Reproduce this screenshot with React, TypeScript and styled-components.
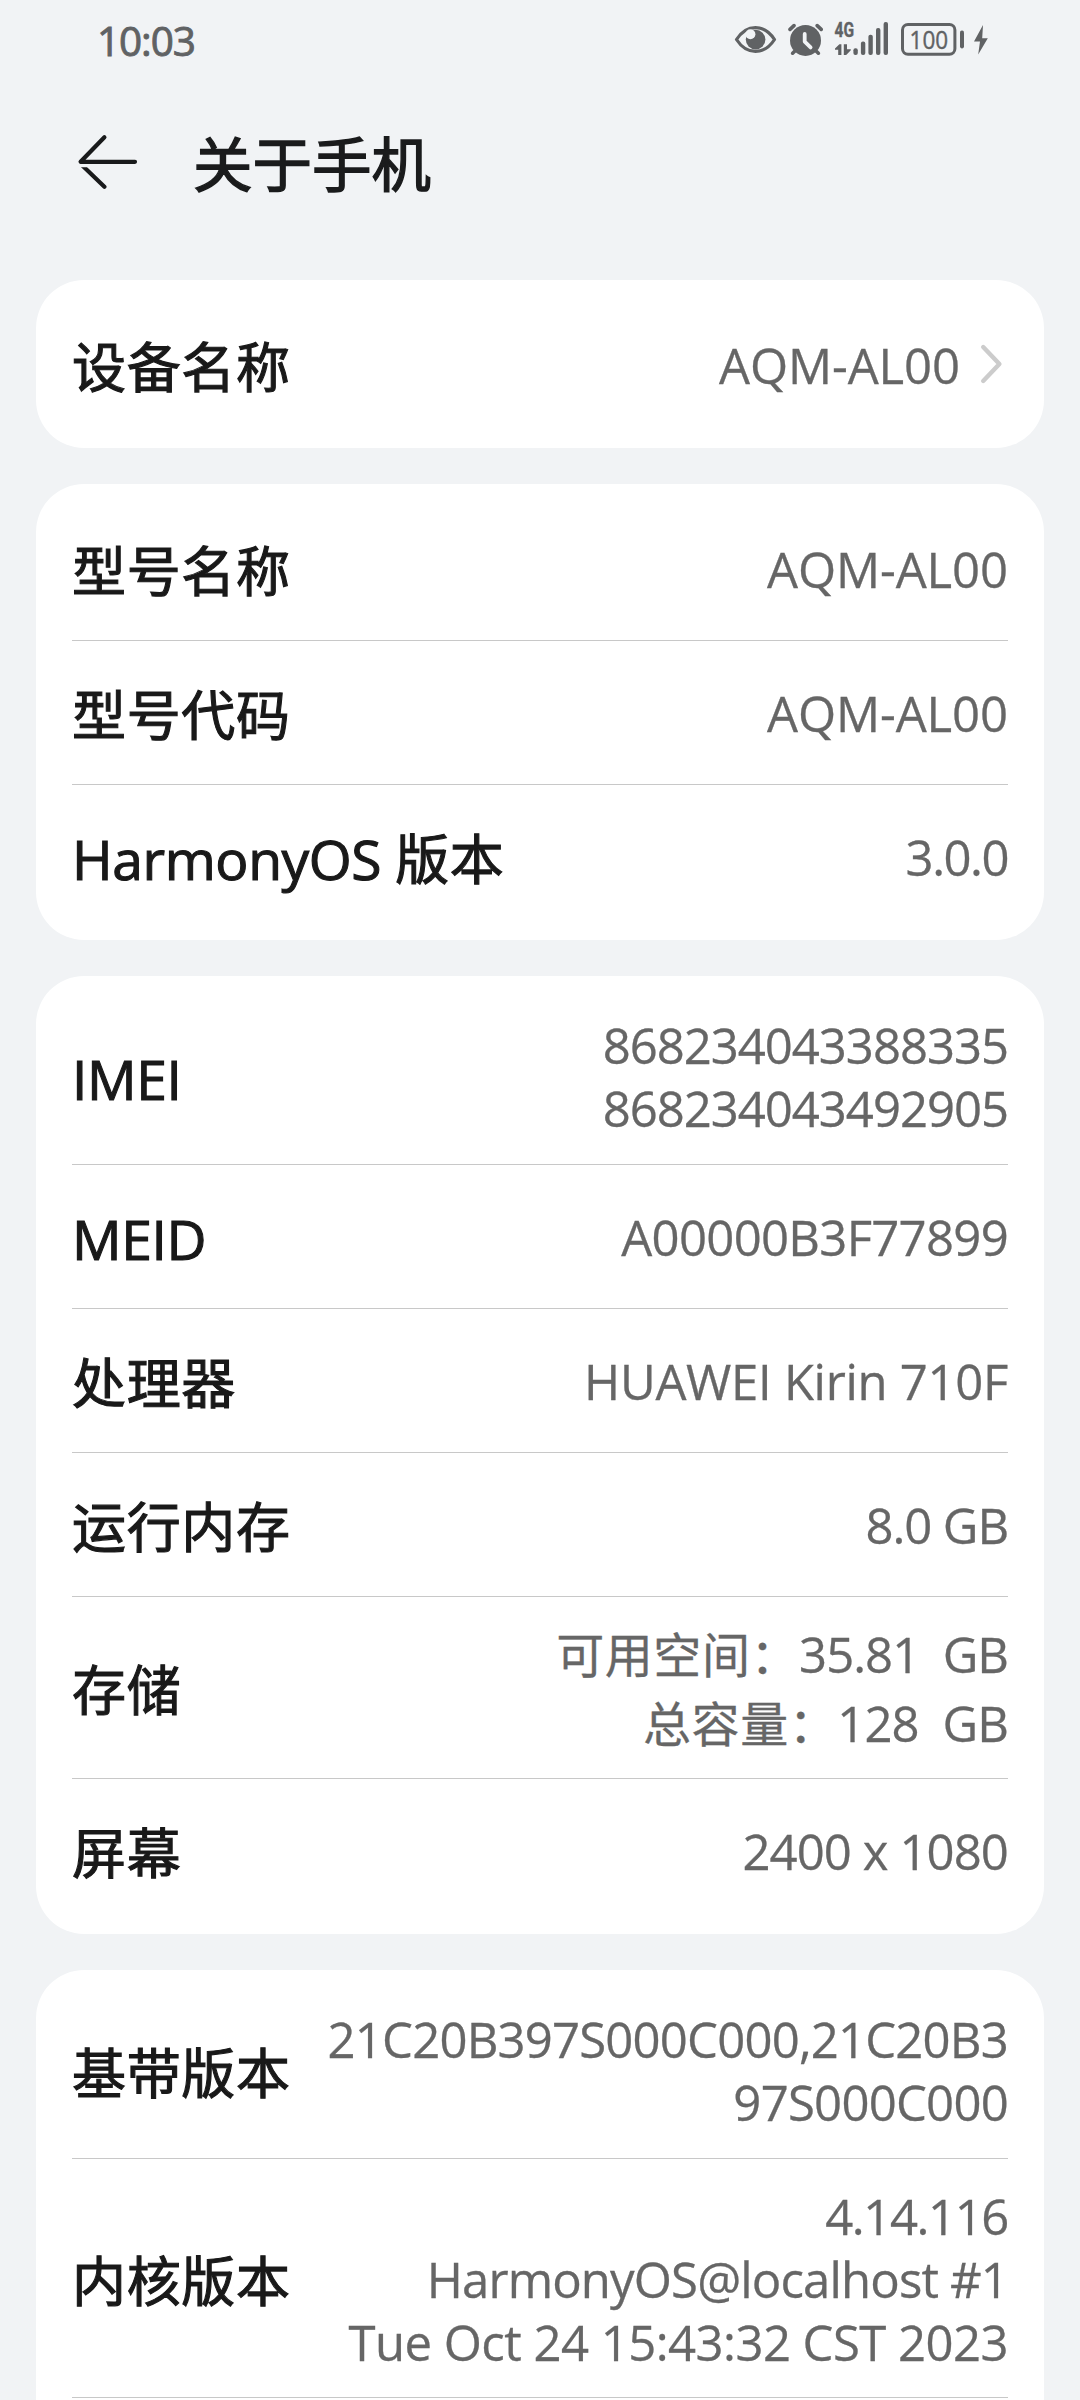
import React from "react";
import styled, { createGlobalStyle } from "styled-components";

const INK = "#606264";
const BG = "#f1f3f5";

const GlobalStyle = createGlobalStyle`
  * { box-sizing: border-box; }
  body {
    margin: 0;
    background: ${BG};
    font-family: "Open Sans", "Noto Sans CJK SC", sans-serif;
  }
`;

const Screen = styled.main`
  width: 1080px;
  height: 2400px;
  overflow: hidden;
  background: ${BG};
  display: flex;
  flex-direction: column;
`;

const StatusBar = styled.header`
  height: 80px;
  flex: none;
  padding: 0 92px 0 97px;
  display: flex;
  justify-content: space-between;
`;

const Clock = styled.span`
  padding-top: 1px;
  font-size: 40.5px;
  line-height: 80px;
  letter-spacing: -1.1px;
  color: ${INK};
  -webkit-text-stroke: 0.9px ${INK};
`;

const StatusIcons = styled.div`
  display: flex;
  svg { display: block; flex: none; }
`;

const TitleBar = styled.div`
  height: 200px;
  flex: none;
  display: flex;
  align-items: flex-start;
  padding: 34px 0 0 72px;
`;

const BackButton = styled.button`
  width: 72px;
  height: 96px;
  padding: 0;
  border: 0;
  background: none;
  svg { display: block; }
`;

const Title = styled.h1`
  margin: -1px 0 0 49px;
  font-family: "Noto Sans CJK SC", sans-serif;
  font-size: 59.5px;
  font-weight: 400;
  line-height: 96px;
  color: #1a1b1c;
  -webkit-text-stroke: 1.4px #1a1b1c;
`;

const List = styled.div`
  display: flex;
  flex-direction: column;
  gap: 36px;
  padding: 0 36px;
`;

const Card = styled.section`
  padding: 12px 36px;
  border-radius: 48px;
  background: #fff;
`;

const Row = styled.div<{ $height: number }>`
  height: ${(p) => p.$height}px;
  display: flex;
  align-items: center;
  justify-content: space-between;
  & + & { border-top: 1px solid #c8c8c8; }
`;

const Label = styled.span`
  flex: none;
  padding-top: 5px;
  font-size: 54px;
  line-height: 72px;
  letter-spacing: -0.4px;
  white-space: pre;
  color: #191919;
  -webkit-text-stroke: 1.1px #191919;
`;

const Values = styled.div`
  display: flex;
  align-items: center;
`;

const ValueLines = styled.div<{ $leading: number }>`
  display: flex;
  flex-direction: column;
  align-items: flex-end;
  padding-top: 2px;
  font-size: 48px;
  line-height: ${(p) => p.$leading}px;
  white-space: pre;
  color: #666;
  -webkit-text-stroke: 0.3px #666;
`;

const ValueLine = styled.span<{ $tracking: number }>`
  letter-spacing: ${(p) => p.$tracking}px;
`;

const Latin = styled.span`
  font-size: 1.022em;
`;

const Han = styled.span`
  letter-spacing: 0.012em;
`;

const Chevron = styled.svg`
  display: block;
  margin-left: 20px;
`;

/* Latin runs are set slightly larger than the Chinese ones beside them. */
function Mixed({ text }: { text: string }) {
  const runs = text.match(/[\u3000-\uffef]+|[^\u3000-\uffef]+/g) ?? [];
  return (
    <>
      {runs.map((run, i) =>
        /[\u3000-\uffef]/.test(run) ? <Han key={i}>{run}</Han> : <Latin key={i}>{run}</Latin>
      )}
    </>
  );
}

type Line = [text: string, tracking: number];
type Item = { label: string; lines: Line[]; height?: number; leading?: number; link?: boolean };

const groups: Item[][] = [
  [{ label: "设备名称", lines: [["AQM-AL00", -0.1]], link: true }],
  [
    { label: "型号名称", lines: [["AQM-AL00", -0.1]] },
    { label: "型号代码", lines: [["AQM-AL00", -0.1]] },
    { label: "HarmonyOS 版本", lines: [["3.0.0", -1.5]] },
  ],
  [
    { label: "IMEI", height: 176, lines: [["868234043388335", -1.02], ["868234043492905", -1.02]] },
    { label: "MEID", lines: [["A00000B3F77899", -0.7]] },
    { label: "处理器", lines: [["HUAWEI Kirin 710F", -0.3]] },
    { label: "运行内存", lines: [["8.0 GB", -1.1]] },
    {
      label: "存储",
      height: 182,
      leading: 69,
      lines: [["可用空间：35.81  GB", -1], ["总容量：128  GB", -0.9]],
    },
    { label: "屏幕", lines: [["2400 x 1080", -0.9]] },
  ],
  [
    { label: "基带版本", height: 176, lines: [["21C20B397S000C000,21C20B3", -0.8], ["97S000C000", -0.75]] },
    {
      label: "内核版本",
      height: 239,
      lines: [["4.14.116", -1.4], ["HarmonyOS@localhost #1", -0.85], ["Tue Oct 24 15:43:32 CST 2023", -0.54]],
    },
    { label: "", lines: [] },
  ],
];

function EyeIcon() {
  return (
    <svg width="54" height="80" viewBox="734 0 54 80">
      <path d="M736.5 39.5C741 32.5 747.5 27.6 755.5 27.6S770 32.5 774.5 39.5C770 46.5 763.5 51.4 755.5 51.4S741 46.5 736.5 39.5Z" fill="none" stroke={INK} strokeWidth="3.2" strokeLinejoin="round" />
      <circle cx="755.6" cy="39.6" r="9.8" fill={INK} />
      <circle cx="750.4" cy="34.2" r="5" fill={BG} />
    </svg>
  );
}

function AlarmIcon() {
  return (
    <svg width="46" height="80" viewBox="788 0 46 80">
      <g stroke={INK} strokeWidth="3.6" strokeLinecap="round">
        <path d="M790 29.4L794 25.6M817.2 25.6L821.2 29.4" />
        <path d="M792.6 53.2L797 49M818.4 53.2L814 49" />
      </g>
      <circle cx="805.5" cy="40.4" r="15.5" fill={INK} />
      <path d="M804.7 34V41.6L810.6 47.4" fill="none" stroke={BG} strokeWidth="3.8" strokeLinecap="round" strokeLinejoin="round" />
    </svg>
  );
}

function SignalIcon() {
  const bars: [number, number][] = [[853.4, 48.2], [860.9, 41.6], [868.4, 34.8], [876, 28], [883.6, 22]];
  return (
    <svg width="66" height="80" viewBox="834 0 66 80" fill={INK}>
      <text x="834.6" y="36.8" fontSize="20" fontWeight="700" fontFamily="Roboto, sans-serif" stroke={INK} strokeWidth="0.4" textLength="19.5" lengthAdjust="spacingAndGlyphs">4G</text>
      <path d="M841.4 44.2V55H838.2V49.8H835V48.6L839.4 44.2Z" />
      <path d="M843.8 44.2H847V49.3H850.8V50.3L846.2 55H843.8Z" />
      {bars.map(([x, y]) => (
        <rect key={x} x={x} y={y} width="4.4" height={55 - y} rx="2" />
      ))}
    </svg>
  );
}

function BatteryIcon() {
  return (
    <svg width="88" height="80" viewBox="900 0 88 80" fill={INK}>
      <rect x="902.5" y="24.5" width="52.4" height="29.8" rx="5.5" fill="none" stroke={INK} strokeWidth="3" />
      <text x="909.6" y="49" fontSize="25" fontFamily='"Open Sans", sans-serif' stroke={INK} strokeWidth="0.4" textLength="38.6" lengthAdjust="spacingAndGlyphs">100</text>
      <rect x="960" y="30.6" width="4" height="17.8" rx="1.8" />
      <path d="M983 25L974 41.6H980L978.2 54.4L987.8 38.2H982.2Z" />
    </svg>
  );
}

function BackArrow() {
  return (
    <svg width="72" height="96" viewBox="72 114 72 96" fill="none" stroke="#191a1b" strokeWidth="4.2" strokeLinecap="round" strokeLinejoin="round">
      <clipPath id="below-shaft">
        <rect x="72" y="167.2" width="72" height="30" />
      </clipPath>
      <path d="M104.4 137.2L80.6 161.8H135" />
      <path d="M78.5 161.8L104.4 186.8" clipPath="url(#below-shaft)" />
    </svg>
  );
}

export default function App() {
  return (
    <Screen>
      <GlobalStyle />
      <StatusBar>
        <Clock>10:03</Clock>
        <StatusIcons>
          <EyeIcon />
          <AlarmIcon />
          <SignalIcon />
          <BatteryIcon />
        </StatusIcons>
      </StatusBar>
      <TitleBar>
        <BackButton aria-label="返回">
          <BackArrow />
        </BackButton>
        <Title>关于手机</Title>
      </TitleBar>
      <List>
        {groups.map((items, g) => (
          <Card key={g}>
            {items.map((item, i) => (
              <Row key={i} $height={item.height ?? 144}>
                <Label>
                  <Mixed text={item.label} />
                </Label>
                <Values>
                  <ValueLines $leading={item.leading ?? 63}>
                    {item.lines.map(([text, tracking]) => (
                      <ValueLine key={text} $tracking={tracking}>
                        <Mixed text={text} />
                      </ValueLine>
                    ))}
                  </ValueLines>
                  {item.link && (
                    <Chevron width="28" height="48" viewBox="980 340 28 48" fill="none" stroke="#ccc" strokeWidth="4.4" strokeLinecap="round" strokeLinejoin="round">
                      <path d="M983.2 347L999.4 364L983.2 381" />
                    </Chevron>
                  )}
                </Values>
              </Row>
            ))}
          </Card>
        ))}
      </List>
    </Screen>
  );
}
